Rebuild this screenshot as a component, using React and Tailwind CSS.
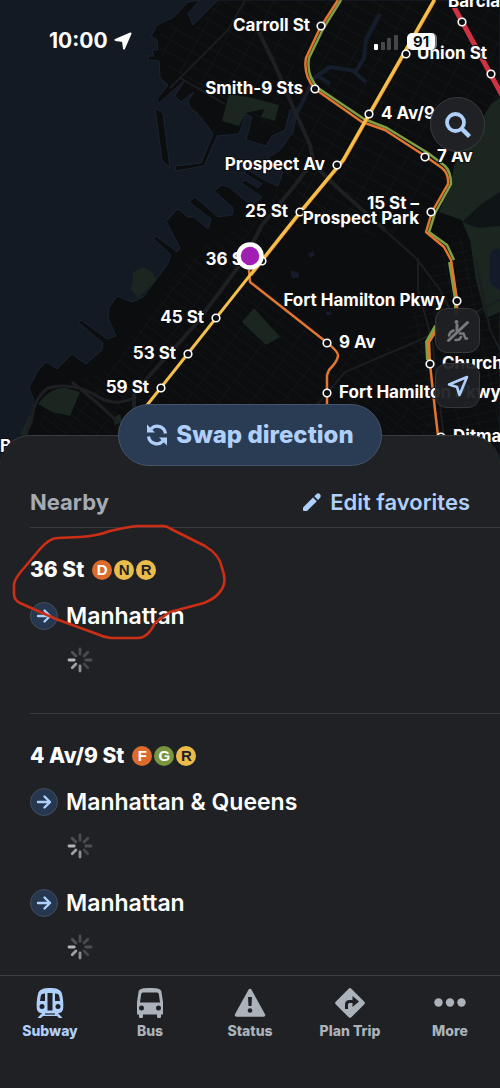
// src/App.jsx
// -----------------------------------------------------------------------
// Subway companion: live map on top, nearby stations in a bottom sheet,
// and the main tab bar.
// -----------------------------------------------------------------------

import React, { useState } from 'react';

const BULLETS = {
  D: 'bg-[#dc6b2d] text-white',
  F: 'bg-[#dc6b2d] text-white',
  G: 'bg-[#799540] text-white',
  N: 'bg-[#ecbc4b] text-[#202125]',
  R: 'bg-[#ecbc4b] text-[#202125]',
};

const STATIONS = [
  { name: '36 St', routes: ['D', 'N', 'R'], directions: ['Manhattan'] },
  { name: '4 Av/9 St', routes: ['F', 'G', 'R'], directions: ['Manhattan & Queens', 'Manhattan'] },
];

// Map labels: station dot (cx, cy) and text anchor (x, y)
const STOPS = [
  { cx: 321, cy: 26, x: 310, y: 31, end: true, label: 'Carroll St' },
  { cx: 315, cy: 89, x: 303, y: 94, end: true, label: 'Smith-9 Sts' },
  { cx: 337, cy: 165, x: 325, y: 170, end: true, label: 'Prospect Av' },
  { cx: 300, cy: 212, x: 288, y: 217, end: true, label: '25 St' },
  { cx: 262, cy: 261, x: 249, y: 265, end: true, label: '36 St' },
  { cx: 216, cy: 318, x: 204, y: 323, end: true, label: '45 St' },
  { cx: 188, cy: 354, x: 176, y: 359, end: true, label: '53 St' },
  { cx: 161, cy: 388, x: 149, y: 393, end: true, label: '59 St' },
  { cx: 406, cy: 54, x: 417, y: 59, label: 'Union St' },
  { cx: 369, cy: 114, x: 381, y: 119, label: '4 Av/9 St' },
  { cx: 425, cy: 157, x: 437, y: 162, label: '7 Av' },
  { cx: 457, cy: 301, x: 445, y: 306, end: true, label: 'Fort Hamilton Pkwy' },
  { cx: 327, cy: 343, x: 339, y: 348, label: '9 Av' },
  { cx: 327, cy: 393, x: 339, y: 398, label: 'Fort Hamilton Pkwy' },
  { cx: 430, cy: 364, x: 442, y: 369, label: 'Church Av' },
  { cx: 441, cy: 437, x: 453, y: 442, label: 'Ditmas Av' },
  { cx: 462, cy: 22, x: 448, y: 7, label: 'Barclays Ctr' },
  { cx: 491, cy: 74 },
];

/* ── Icons ──────────────────────────────────────────────────────────── */

function SubwayIcon() {
  return (
    <svg viewBox="0 0 28 32" className="h-8 w-7" fill="currentColor" aria-hidden="true">
      <path
        fillRule="evenodd"
        d="M14 1C8 1 3 2 2 7C1 11 .5 15 .7 20c.1 4 2 6 5 6h16.600c3 0 4.900-2 5-6c.2-5-.3-9-1.300-13C25 2 20 1 14 1ZM11.500 6v17.500h5V6h-5ZM8.500 6.500C6 6.500 5 7.500 4.700 9.500L4 14h5V6.500h-.5ZM19 6.500V14h5l-.7-4.500c-.3-2-1.300-3-3.800-3H19ZM6 17a2.500 2.500 0 1 0 0 5a2.500 2.500 0 0 0 0-5ZM22 17a2.500 2.500 0 1 0 0 5a2.500 2.500 0 0 0 0-5Z"
      />
      <path d="M6 26h16l4.500 5H23l-2-2H7l-2 2H1.500L6 26Z" />
      <path d="M9 27h10" stroke="#202125" strokeWidth="1.200" />
    </svg>
  );
}

function BusIcon() {
  return (
    <svg viewBox="0 0 28 32" className="h-8 w-7" fill="currentColor" aria-hidden="true">
      <path
        fillRule="evenodd"
        d="M14 1C7 1 3 1.500 2.500 5L1 15v12.500h2V30q0 1 1 1h2q1 0 1-1v-2.500h14V30q0 1 1 1h2q1 0 1-1v-2.500h2V15L25.500 5C25 1.500 21 1 14 1ZM7 5.500h14q1.500 0 1.800 1.500l1.200 8.500H4L5.200 7Q5.500 5.500 7 5.500ZM5.500 18.500a2.500 2.500 0 1 0 0 5a2.500 2.500 0 0 0 0-5ZM22.500 18.500a2.500 2.500 0 1 0 0 5a2.500 2.500 0 0 0 0-5Z"
      />
    </svg>
  );
}

function StatusIcon() {
  return (
    <svg viewBox="0 0 32 32" className="h-8 w-8" aria-hidden="true">
      <path d="M16 3.500L29.500 28h-27Z" fill="currentColor" stroke="currentColor" strokeWidth="3.500" strokeLinejoin="round" />
      <path d="M14 10h4l-.5 9h-3Z" fill="#202125" />
      <circle cx="16" cy="23.500" r="2.300" fill="#202125" />
    </svg>
  );
}

function PlanTripIcon() {
  return (
    <svg viewBox="0 0 32 32" className="h-8 w-8" aria-hidden="true">
      <path d="M16 3.500L28.500 16L16 28.500L3.500 16Z" fill="currentColor" stroke="currentColor" strokeWidth="4.500" strokeLinejoin="round" />
      <path d="M12.500 22v-4.500q0-3 3-3h4" fill="none" stroke="#202125" strokeWidth="3" />
      <path d="M18.500 9L25 14.500L18.500 20Z" fill="#202125" />
    </svg>
  );
}

function MoreIcon() {
  return (
    <svg viewBox="0 0 32 32" className="h-8 w-8" fill="currentColor" aria-hidden="true">
      <circle cx="4.500" cy="15.500" r="4.200" />
      <circle cx="16" cy="15.500" r="4.200" />
      <circle cx="27.500" cy="15.500" r="4.200" />
    </svg>
  );
}

function SwapIcon() {
  return (
    <svg viewBox="0 0 22 22" className="h-[22px] w-[22px]" fill="none" stroke="currentColor" strokeWidth="3.200" aria-hidden="true">
      <path d="M19.500 9.500A8.500 8.500 0 0 0 5 4.800" />
      <path d="M2.500 12.500A8.500 8.500 0 0 0 17 17.200" />
      <path d="M1 .5V8.500H9Z" fill="currentColor" stroke="none" />
      <path d="M21 21.500V13.500H13Z" fill="currentColor" stroke="none" />
    </svg>
  );
}

function PencilIcon() {
  return (
    <svg viewBox="0 0 20 20" className="h-5 w-5" fill="currentColor" aria-hidden="true">
      <path d="M1 15.500L11 5.500L14.800 9.300L5 19H2Q1 19 1 18Z" />
      <path d="M12.300 4.200L14.600 1.900Q16.200.5 17.800 2Q19.500 3.700 18.300 5.500L16 8Z" />
    </svg>
  );
}

function ArrowIcon() {
  return (
    <span className="flex h-7 w-7 shrink-0 items-center justify-center rounded-full border border-[#434d5c] bg-[#263850] text-[#afd0fb]">
      <svg viewBox="0 0 16 16" className="h-4 w-4" fill="none" stroke="currentColor" strokeWidth="2.400" strokeLinecap="round" strokeLinejoin="round" aria-hidden="true">
        <path d="M2 8h12M8.500 2.500L14 8l-5.500 5.500" />
      </svg>
    </span>
  );
}

// Eight spokes, fading clockwise from the left one
const SPOKES = ['#4a4b4f', '#4a4b4f', '#4e4f53', '#45464a', '#8d8e91', '#a0a1a4', '#b5b6b8', '#505155'];

function Spinner() {
  return (
    <svg viewBox="0 0 26 26" className="h-[26px] w-[26px]" strokeWidth="2.800" strokeLinecap="round" role="img" aria-label="Loading">
      {SPOKES.map((color, i) => (
        <path key={i} d="M13 2v5.200" stroke={color} transform={`rotate(${i * 45} 13 13)`} />
      ))}
    </svg>
  );
}

/* ── Map ────────────────────────────────────────────────────────────── */

function SubwayMap() {
  return (
    <svg
      viewBox="0 0 500 470"
      preserveAspectRatio="xMidYMin slice"
      className="absolute inset-x-0 top-0 h-[470px] w-full"
      fill="none"
      role="img"
      aria-label="Subway map"
    >
      <defs>
        <pattern id="blocks" width="26" height="9" patternUnits="userSpaceOnUse" patternTransform="rotate(37)">
          <path d="M0 0H26M0 0V9" stroke="#17181b" strokeWidth="1" />
        </pattern>
        <pattern id="blocksNorth" width="24" height="12" patternUnits="userSpaceOnUse" patternTransform="rotate(29)">
          <path d="M0 0H24M0 0V12" stroke="#18191c" strokeWidth="1" />
        </pattern>
        <pattern id="blocksEast" width="20" height="9" patternUnits="userSpaceOnUse" patternTransform="rotate(-12)">
          <path d="M0 0H20M0 0V9" stroke="#181a1c" strokeWidth="1" />
        </pattern>
      </defs>

      <rect width="500" height="470" fill="#131a23" />

      {/* Land */}
      <g fill="#0c0d0f" stroke="#1b2432" strokeWidth="1">
        <path d="M200 0L188 13L193 25L218 0H500V470H20L24 433L34 400L29 388L38 370L46 362L57 369L72 354L86 364L102 350L103 343L79 323L81 320L107 339L116 336L108 318L109 308L117 296L132 302L143 297L167 265L171 255L153 238L156 236L177 252L180 248L166 221L178 209L188 217L194 217L208 229L211 219L189 202L195 197L218 217L232 215L233 208L214 191L222 185L229 187L252 206L262 197L241 183L245 180L258 188L262 184L244 173L248 170L266 181L278 186L283 172L268 158L280 150L293 132L298 108L290 110L285 130L272 136L266 146L246 140L252 117L246 114L239 134L217 136L204 166L176 171L175 166L201 163L213 134L206 124L197 113L190 108L188 101L194 92L181 102L175 96L184 81L159 103L157 99L168 85L160 78L159 61L148 60V56L154 56L152 50L158 50L157 40L151 36L157 25L174 17L188 2Z" />
        <path d="M155 108L163 113L170 168L162 160Z" />
      </g>

      {/* Street grid */}
      <path d="M160 25L192 30L220 0H300L290 106L284 128L266 132L246 112L220 96L192 90L162 60Z" fill="url(#blocksNorth)" />
      <path d="M300 0H500V100L450 170L430 215L380 240L308 210L284 170L298 110Z" fill="url(#blocksNorth)" />
      <path d="M190 255L262 270L345 350L425 345L440 470H30L45 392L110 370Z" fill="url(#blocks)" />
      <path d="M262 210L300 172L330 220L290 235L250 275L200 250Z" fill="url(#blocks)" />
      <path d="M420 300L452 225L500 300V470H430L400 340Z" fill="url(#blocksEast)" />

      {/* Cemetery, left without streets */}
      <path d="M312 228L380 238L425 290L400 340L335 340L262 275L275 250Z" fill="#0c0d0f" />

      {/* Canal */}
      <path d="M290 125L302 103L314 78L330 67L356 71L364 58L366 40L380 14M318 76L330 84M352 70L366 82" stroke="#151d2b" strokeWidth="4" strokeLinejoin="round" />

      {/* Parks */}
      <g fill="#1a261f">
        <path d="M229 94L253 98L279 105L275 121L261 117L264 109L246 113L239 126L222 121Z" />
        <path d="M500 98L491 104L454 166L451 182L439 212L480 226L500 245Z" />
        <path d="M455 205L500 222V312L486 318L476 280L470 240Z" />
        <path d="M254 308L280 337L266 345L242 322Z" />
        <path d="M133 272L143 267L152 272L157 280L138 298L130 288L133 282Z" />
        <path d="M38 404Q50 387 66 388L80 392L70 416L52 412Z" />
        <path d="M31 414L33 422L24 436L20 434Z" />
        <path d="M113 418L120 414L122 422L115 425Z" />
      </g>
      <path d="M462 222L480 205L500 192V226L478 228Z" fill="#0f1517" />
      <path d="M490 252Q500 245 500 252V290L490 284Z" fill="#131b2b" />
      <path d="M291 270l8 3v4l-6 2l-2-4ZM308 254l5-3l2 4l-5 3ZM326 312l5-1v4h-5Z" fill="#151b2a" />

      {/* Highways */}
      <g stroke="#1d1f22" strokeWidth="4">
        <path d="M253 20L275 65L290 100L310 145L314 165L340 190L385 230" />
        <path d="M314 160L295 185L262 225L245 258L195 325L150 375L134 395V410" />
        <path d="M134 398Q112 408 94 394Q70 382 48 388Q34 398 32 418L24 440" strokeWidth="3" />
        <path d="M72 382L96 402L118 422" strokeWidth="3" />
      </g>
      <g stroke="#1b1d20" strokeWidth="2">
        <path d="M380 226L416 258L440 290L450 310" />
        <path d="M262 470L345 372L420 340L500 300" />
        <path d="M418 258V290L432 340L448 470M476 260L490 330L500 350" />
        <path d="M245 0L228 30L170 88M180 78L225 104" />
      </g>

      {/* Routes */}
      <g strokeLinejoin="round" strokeWidth="2.500">
        <g stroke="#80a046">
          <path d="M341 0L323 29L309 58Q306 75 318 88L364 119L387 128L428 153L445 166Q451 172 451 184L435 213L429 232L447 245L454 260" />
          <path d="M450 262L456 300V315M436 326L427 342L428 360" strokeWidth="4" />
        </g>
        <g stroke="#e0762f">
          <path d="M338 0L320 28L306 58Q303 75 315 89L362 122L385 130L425 156L442 168Q449 174 448 184L432 212L426 232L444 247L451 260L457 300V315" />
          <path d="M438 328L429 342L430 364L435 410L442 470" />
          <path d="M249 270L250 282L325 341Q339 352 338 356Q337 362 329 370L327 375V412" />
        </g>
        <path d="M435 0L370 114L344 160L301 212L251 275" stroke="#ee8e2c" strokeWidth="3" />
        <path d="M434 0L369 114L343 160L300 212L262 260L140 414" stroke="#f4c04c" strokeWidth="3" />
        <path d="M453 5L504 99" stroke="#cf3240" strokeWidth="5" />
      </g>

      {/* Stops */}
      <g fill="#0c0d0f" stroke="#fff" strokeWidth="1.600">
        <circle cx="431" cy="212" r="3.800" />
        {STOPS.map((s) => (
          <circle key={`${s.cx}-${s.cy}`} cx={s.cx} cy={s.cy} r="3.800" />
        ))}
      </g>
      <g
        fill="#fff"
        stroke="#0c0d0f"
        strokeWidth="2"
        paintOrder="stroke"
        className="font-['Inter',sans-serif] text-[17px] font-bold"
      >
        {STOPS.filter((s) => s.label).map((s) => (
          <text key={`${s.label}-${s.cy}`} x={s.x} y={s.y} textAnchor={s.end ? 'end' : 'start'}>
            {s.label}
          </text>
        ))}
        <text x="419" y="209" textAnchor="end">15 St –</text>
        <text x="419" y="224" textAnchor="end">Prospect Park</text>
        <text x="0" y="452">Bay Ridge</text>
      </g>

      {/* Current location */}
      <circle cx="250" cy="256" r="11.500" fill="#a21fb4" stroke="#fff" strokeWidth="4.500" />
    </svg>
  );
}

function StatusBar() {
  return (
    <div className="relative flex items-center justify-between pr-[63px] pl-[49px] pt-[26px] text-white">
      <div className="flex items-center gap-[6px]">
        <span className="text-[21px] leading-[30px] font-bold">10:00</span>
        <svg viewBox="0 0 18 18" className="h-[18px] w-[18px]" fill="currentColor" stroke="currentColor" strokeWidth="2" strokeLinejoin="round" aria-hidden="true">
          <path d="M16.500 1.500L10 16.500L9 9L1.500 8Z" />
        </svg>
      </div>
      <div className="flex items-center gap-2">
        <svg viewBox="0 0 26 18" className="h-[18px] w-[26px]" aria-hidden="true">
          <rect x="1" y="12" width="4" height="6" rx="1" fill="#fff" />
          <rect x="8" y="10" width="4" height="8" rx="1" fill="#46474a" />
          <rect x="14" y="6" width="4" height="12" rx="1" fill="#46474a" />
          <rect x="21" y="3" width="4" height="15" rx="1" fill="#46474a" />
        </svg>
        <span className="flex h-[17px] w-[30px] items-center justify-center rounded-[5px] border-r-2 border-[#77787b] bg-white text-[15px] leading-[17px] font-bold text-[#111]">
          91
        </span>
      </div>
    </div>
  );
}

function MapControls() {
  return (
    <>
      <button type="button" aria-label="Search" className="absolute top-[97px] right-[15px] flex h-[55px] w-[55px] items-center justify-center rounded-full border border-[#3a3b3f] bg-[#202125] text-[#afd0fb]">
        <svg viewBox="0 0 28 28" className="h-7 w-7" fill="none" stroke="currentColor" aria-hidden="true">
          <circle cx="11.500" cy="11.500" r="8.500" strokeWidth="3.800" />
          <path d="M17 17L25.500 25.500" strokeWidth="4.400" />
        </svg>
      </button>
      <div className="absolute top-[308px] right-[20px] flex flex-col gap-[10px]">
        <button type="button" aria-label="Accessible stations" className="flex h-[45px] w-[45px] items-center justify-center rounded-xl border border-[#36373b] bg-[#202125]/95 text-[#77797e]">
          <svg viewBox="0 0 24 24" className="h-6 w-6" fill="none" stroke="currentColor" strokeWidth="2.600" strokeLinecap="round" strokeLinejoin="round" aria-hidden="true">
            <circle cx="10.500" cy="3" r="2" fill="currentColor" stroke="none" />
            <path d="M11 6v5.500" strokeWidth="3" />
            <path d="M3 16.500Q4 12.500 7.500 11.500" />
            <path d="M9.500 21Q13.500 21.500 15 18" />
            <path d="M14 14.500h3.500l2 5h1.500" />
            <path d="M2.500 21.500L21.500 3.500" strokeWidth="3" />
          </svg>
        </button>
        <button type="button" aria-label="Locate me" className="flex h-[45px] w-[45px] items-center justify-center rounded-xl border border-[#36373b] bg-[#202125]/95 text-[#afd0fb]">
          <svg viewBox="0 0 22 22" className="h-[22px] w-[22px]" fill="none" stroke="currentColor" strokeWidth="2.600" strokeLinejoin="round" aria-hidden="true">
            <path d="M2 9.500L20 2L12.500 20L10 12Z" />
          </svg>
        </button>
      </div>
    </>
  );
}

/* ── Sheet ──────────────────────────────────────────────────────────── */

function Station({ name, routes, directions }) {
  return (
    <section className="ml-[30px] border-t border-[#393b40]">
      <h3 className="flex h-[84px] items-center gap-2 text-[21px] font-extrabold text-white">
        {name}
        <span className="flex gap-[2px]">
          {routes.map((r) => (
            <span key={r} className={`flex h-5 w-5 items-center justify-center rounded-full text-[15px] leading-5 font-bold font-['Liberation_Sans',sans-serif] ${BULLETS[r]}`}>
              {r}
            </span>
          ))}
        </span>
      </h3>
      {directions.map((d) => (
        <div key={d} className="-mt-[10px] mb-[8px]">
          <div className="flex h-[28px] items-center gap-2">
            <ArrowIcon />
            <span className="text-[23px] leading-7 font-semibold text-white">{d}</span>
          </div>
          <div className="flex h-[75px] pt-[17px] pl-[37px]">
            <Spinner />
          </div>
        </div>
      ))}
    </section>
  );
}

const TABS = [
  { name: 'Subway', Icon: SubwayIcon },
  { name: 'Bus', Icon: BusIcon },
  { name: 'Status', Icon: StatusIcon },
  { name: 'Plan Trip', Icon: PlanTripIcon },
  { name: 'More', Icon: MoreIcon },
];

export default function App() {
  const [tab, setTab] = useState('Subway');

  return (
    <div className="flex h-screen flex-col overflow-hidden bg-[#202125] font-['Inter',sans-serif]">
      {/* ── Map ──────────────────────────────────────────────────────── */}
      <header className="relative h-[435px] shrink-0">
        <SubwayMap />
        <StatusBar />
        <MapControls />
      </header>

      {/* ── Nearby sheet ─────────────────────────────────────────────── */}
      <main className="relative min-h-0 flex-1 rounded-t-[30px] border-t border-[#393b40] bg-[#202125]">
        <button type="button" className="absolute -top-8 left-1/2 flex h-[62px] w-[264px] -translate-x-1/2 items-center justify-center gap-2 rounded-full border border-[#45546a] bg-[#2a3b54] text-[24px] font-extrabold text-[#afd0fb]">
          <SwapIcon />
          Swap direction
        </button>

        <div className="flex items-end justify-between px-[30px] pt-[51px] pb-[10px]">
          <h2 className="text-[22px] leading-[30px] font-bold text-[#a5abb3]">Nearby</h2>
          <button type="button" className="flex items-center gap-2 text-[22px] leading-[30px] font-semibold text-[#afd0fb]">
            <PencilIcon />
            Edit favorites
          </button>
        </div>

        {STATIONS.map((s) => (
          <Station key={s.name} {...s} />
        ))}

        {/* Hand-drawn marker around the first station */}
        <svg viewBox="0 0 214 116" className="pointer-events-none absolute top-[88px] left-[12px] h-[116px] w-[214px]" fill="none" stroke="#cc2f16" strokeWidth="2.600" strokeLinejoin="round" aria-hidden="true">
          <path d="M125 2H151Q155 2 159 5L193 22Q208 31 210 44Q215 57 210 65Q205 74 192 79L158 88Q148 95 143 99Q136 114 126 114H99Q91 113 85 110L44 95L8 79Q2 76 2 70V60Q3 54 12 44L28 25Q38 14 45 14L68 13Q85 12 98 7Q115 3 125 2Z" />
        </svg>
      </main>

      {/* ── Tab bar ──────────────────────────────────────────────────── */}
      <nav className="relative flex h-[113px] shrink-0 items-start border-t border-[#3f4045] bg-[#202125] pt-[11px]">
        {TABS.map(({ name, Icon }) => (
          <button
            key={name}
            type="button"
            onClick={() => setTab(name)}
            className={`flex flex-1 flex-col items-center gap-[2px] text-[14px] leading-5 font-extrabold ${tab === name ? 'text-[#afd0fb]' : 'text-[#abb2ba]'}`}
          >
            <Icon />
            {name}
          </button>
        ))}
      </nav>
    </div>
  );
}
